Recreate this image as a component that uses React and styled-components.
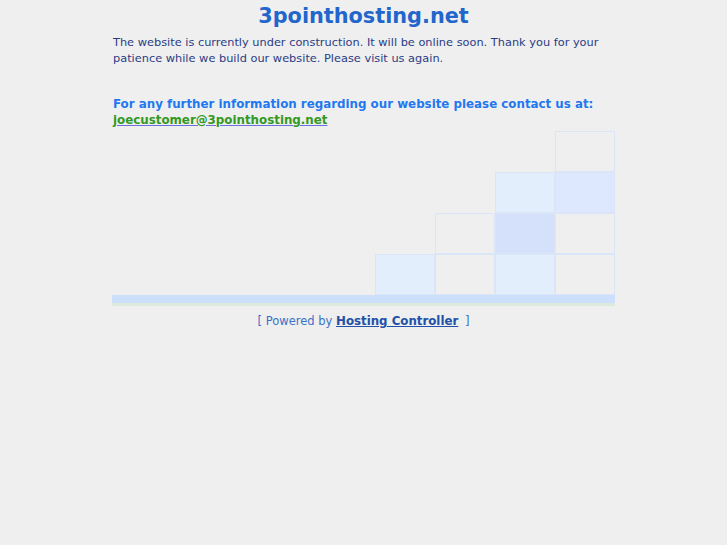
import React from "react"
import styled, { createGlobalStyle } from "styled-components"

const GlobalStyle = createGlobalStyle`
    body {
        margin: 0;
        background: #efefef;
        font-family: "DejaVu Sans", Verdana, sans-serif;
    }
`;

const Page = styled.div`
    width: 503px;
    margin: 0 auto;
    padding-top: 4px;
`;

const Title = styled.h1`
    margin: 0;
    text-align: center;
    font-size: 20.8px;
    font-weight: bold;
    line-height: 24px;
    color: #2266cc;
`;

const Message = styled.p`
    margin: 7px 0 0 1px;
    font-size: 11.35px;
    line-height: 15.5px;
    color: #2b3c84;
`;

const Contact = styled.p`
    margin: 31px 0 0 1px;
    font-size: 11.85px;
    line-height: 15.5px;
    font-weight: bold;
    color: #1f78ef;
`;

const Email = styled.a`
    color: #339922;
    text-decoration: underline;
    text-decoration-color: #6b6fe0;
    text-decoration-thickness: 1px;
`;

const Steps = styled.div`
    display: grid;
    grid-template-columns: 263px repeat(4, 60px);
    grid-template-rows: repeat(4, 41px);
    margin-top: 3px;
`;

const Cell = styled.div`
    grid-column: ${p => p.col + 2};
    grid-row: ${p => p.row + 1};
    border: 1px solid #dae5f8;
    background: ${p => p.fill || "transparent"};
`;

const Base = styled.div`
    height: 8px;
    background: #cce0fd;
    border-bottom: 3px solid #dde9dc;
`;

const Footer = styled.div`
    margin-top: 8px;
    text-align: center;
    font-size: 11.5px;
    color: #3b72c9;
`;

const FooterLink = styled.a`
    font-weight: bold;
    font-size: 11.8px;
    color: #2350a8;
    text-decoration: underline;
    margin-right: 3px;
`;

const cells = [
    { col: 3, row: 0 },
    { col: 2, row: 1, fill: "#e3eefd" },
    { col: 3, row: 1, fill: "#dde7fd" },
    { col: 1, row: 2 },
    { col: 2, row: 2, fill: "#d5e1fb" },
    { col: 3, row: 2 },
    { col: 0, row: 3, fill: "#e3eefd" },
    { col: 1, row: 3 },
    { col: 2, row: 3, fill: "#e3eefd" },
    { col: 3, row: 3 },
]

const App = () => {
    return (
        <Page>
            <GlobalStyle />
            <Title>3pointhosting.net</Title>
            <Message>
                The website is currently under construction. It will be online soon. Thank you for your
                patience while we build our website. Please visit us again.
            </Message>
            <Contact>
                For any further information regarding our website please contact us at:
                <br />
                <Email href="#">joecustomer@3pointhosting.net</Email>
            </Contact>
            <Steps>
                {cells.map((c, i) => (
                    <Cell key={i} col={c.col} row={c.row} fill={c.fill} />
                ))}
            </Steps>
            <Base />
            <Footer>
                [ Powered by <FooterLink href="#">Hosting Controller</FooterLink> ]
            </Footer>
        </Page>
    )
}

export default App
